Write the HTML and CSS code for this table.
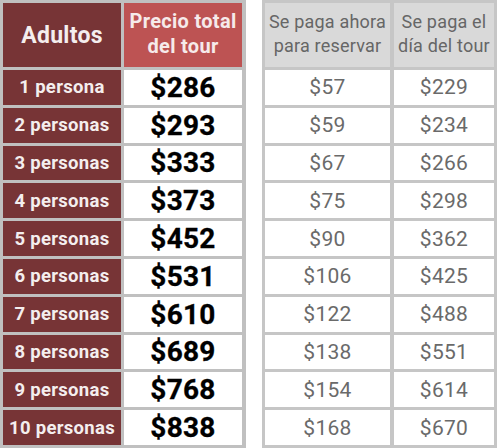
FILE: index.html
```html
<!DOCTYPE html>
<html lang="es">
<head>
<meta charset="utf-8">
<link rel="stylesheet" href="styles.css">
</head>
<body>
<div class="wrap">
  <div class="tbl tbl-main">
    <div class="cell h-adult">Adultos</div>
    <div class="cell h-total">Precio total<br>del tour</div>
    <div class="cell lbl">1 persona</div><div class="cell price">$286</div>
    <div class="cell lbl">2 personas</div><div class="cell price">$293</div>
    <div class="cell lbl">3 personas</div><div class="cell price">$333</div>
    <div class="cell lbl">4 personas</div><div class="cell price">$373</div>
    <div class="cell lbl">5 personas</div><div class="cell price">$452</div>
    <div class="cell lbl">6 personas</div><div class="cell price">$531</div>
    <div class="cell lbl">7 personas</div><div class="cell price">$610</div>
    <div class="cell lbl">8 personas</div><div class="cell price">$689</div>
    <div class="cell lbl">9 personas</div><div class="cell price">$768</div>
    <div class="cell lbl">10 personas</div><div class="cell price">$838</div>
  </div>
  <div class="tbl tbl-pay">
    <div class="cell h-pay">Se paga ahora<br>para reservar</div>
    <div class="cell h-pay">Se paga el<br>día del tour</div>
    <div class="cell val">$57</div><div class="cell val">$229</div>
    <div class="cell val">$59</div><div class="cell val">$234</div>
    <div class="cell val">$67</div><div class="cell val">$266</div>
    <div class="cell val">$75</div><div class="cell val">$298</div>
    <div class="cell val">$90</div><div class="cell val">$362</div>
    <div class="cell val">$106</div><div class="cell val">$425</div>
    <div class="cell val">$122</div><div class="cell val">$488</div>
    <div class="cell val">$138</div><div class="cell val">$551</div>
    <div class="cell val">$154</div><div class="cell val">$614</div>
    <div class="cell val">$168</div><div class="cell val">$670</div>
  </div>
</div>
</body>
</html>
```

FILE: styles.css
```css
html, body {
  margin: 0;
  padding: 0;
  background: #ffffff;
}
body {
  font-family: Roboto, "Liberation Sans", Arial, sans-serif;
  width: 497px;
  height: 448px;
  overflow: hidden;
}
.wrap {
  display: flex;
  gap: 16px;
  height: 448px;
}
.tbl {
  display: grid;
  padding: 3px;
  background: #c0c0c0;
  box-sizing: border-box;
  height: 448px;
  grid-template-rows: 64px repeat(10, 1fr);
}
.tbl-main {
  width: 246px;
  grid-template-columns: 118px 118px;
  gap: 3px;
}
.tbl-pay {
  width: 235px;
  grid-template-columns: 125px 100px;
  column-gap: 4px;
  row-gap: 3px;
  background: #c6c6c6;
}
.cell {
  display: flex;
  align-items: center;
  justify-content: center;
  text-align: center;
  white-space: nowrap;
}
.h-adult {
  background: #773436;
  color: #f4eeee;
  font-weight: 700;
  font-size: 23px;
  letter-spacing: 0.3px;
}
.h-total {
  background: #bd5353;
  color: #f6eaea;
  font-weight: 700;
  font-size: 20px;
  line-height: 25px;
  letter-spacing: 0.3px;
  padding-bottom: 2px;
}
.lbl {
  background: #773436;
  color: #f4eeee;
  font-weight: 700;
  font-size: 18.5px;
  letter-spacing: 0.3px;
}
.price {
  background: #ffffff;
  color: #000000;
  font-weight: 700;
  font-size: 28px;
  letter-spacing: 0.3px;
  -webkit-text-stroke: 0.3px #000;
}
.h-pay {
  background: #d9d9d9;
  color: #666666;
  font-size: 18px;
  line-height: 24px;
  letter-spacing: 0.2px;
  padding-bottom: 2px;
}
.val {
  background: #ffffff;
  color: #6a6a6a;
  font-size: 21px;
  letter-spacing: 0.3px;
}
```
